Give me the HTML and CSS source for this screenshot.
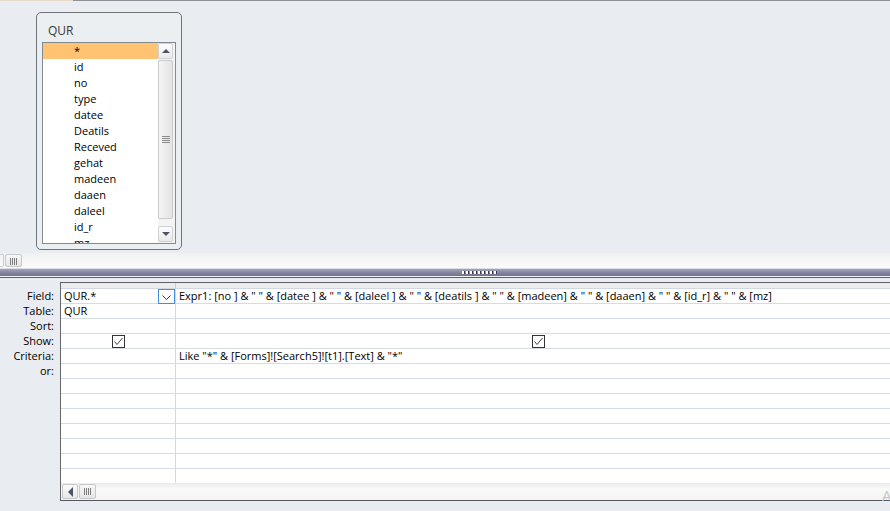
FILE: index.html
```html
<!DOCTYPE html>
<html lang="en">
<head>
  <meta charset="UTF-8">
  <title>Query Design</title>
  <link rel="stylesheet" href="styles.css">
</head>
<body>

<div class="topline"></div>

<!-- table pane -->
<div class="design">
  <div class="tablebox">
    <div class="tabletitle">QUR</div>
    <div class="fieldlist">
      <ul class="fields">
        <li class="sel">*</li>
        <li>id</li>
        <li>no</li>
        <li>type</li>
        <li>datee</li>
        <li>Deatils</li>
        <li>Receved</li>
        <li>gehat</li>
        <li>madeen</li>
        <li>daaen</li>
        <li>daleel</li>
        <li>id_r</li>
        <li>mz</li>
      </ul>
      <div class="vscroll">
        <span class="sbtn"><i class="tri up"></i></span>
        <span class="vthumb"></span>
        <span class="vtrack"></span>
        <span class="sbtn last"><i class="tri down"></i></span>
      </div>
    </div>
  </div>
</div>

<div class="hscroll">
  <span class="hbtn-cut"></span>
  <span class="hthumb"></span>
</div>
<div class="splitter"><span class="dots"></span></div>
<div class="paneedge"></div>

<!-- design grid -->
<div class="lower">
  <div class="labels">
    <div>Field:</div>
    <div>Table:</div>
    <div>Sort:</div>
    <div>Show:</div>
    <div>Criteria:</div>
    <div>or:</div>
  </div>
  <div class="grid">
    <div class="ghead"><span class="c1"></span><span class="c2"></span></div>
    <div class="grow">
      <span class="c1 field">QUR.*<span class="dd"><svg width="9" height="5" viewBox="0 0 9 5"><polyline points="0.5,0.5 4.5,4.5 8.5,0.5" fill="none" stroke="#333" stroke-width="1"/></svg></span></span>
      <span class="c2">Expr1: [no ] &amp; " " &amp; [datee ] &amp; " " &amp; [daleel ] &amp; " " &amp; [deatils ] &amp; " " &amp; [madeen] &amp; " " &amp; [daaen] &amp; " " &amp; [id_r] &amp; " " &amp; [mz]</span>
    </div>
    <div class="grow"><span class="c1">QUR</span><span class="c2"></span></div>
    <div class="grow"><span class="c1"></span><span class="c2"></span></div>
    <div class="grow">
      <span class="c1 chk"><i class="box"><svg width="11" height="11" viewBox="0 0 11 11"><polyline points="1.5,5.5 4,8.5 9.5,2" fill="none" stroke="#444" stroke-width="1"/></svg></i></span>
      <span class="c2 chk"><i class="box"><svg width="11" height="11" viewBox="0 0 11 11"><polyline points="1.5,5.5 4,8.5 9.5,2" fill="none" stroke="#444" stroke-width="1"/></svg></i></span>
    </div>
    <div class="grow"><span class="c1"></span><span class="c2">Like "*" &amp; [Forms]![Search5]![t1].[Text] &amp; "*"</span></div>
    <div class="grow"><span class="c1"></span><span class="c2"></span></div>
    <div class="grow"><span class="c1"></span><span class="c2"></span></div>
    <div class="grow"><span class="c1"></span><span class="c2"></span></div>
    <div class="grow"><span class="c1"></span><span class="c2"></span></div>
    <div class="grow"><span class="c1"></span><span class="c2"></span></div>
    <div class="grow"><span class="c1"></span><span class="c2"></span></div>
    <div class="grow"><span class="c1"></span><span class="c2"></span></div>
    <div class="grow end"><span class="c1"></span><span class="c2"></span></div>
    <div class="gscroll">
      <span class="hbtn"><i class="tri left"></i></span>
      <span class="hthumb"></span>
    </div>
  </div>
</div>

<span class="grip">A</span>

</body>
</html>
```

FILE: styles.css
```css
* { margin: 0; padding: 0; box-sizing: border-box; }
body { width: 890px; height: 511px; overflow: hidden; position: relative;
  background: #e9ecf0; color: #000;
  font-family: "Open Sans", "Noto Sans", sans-serif; font-size: 11px; }

.topline { height: 1px;
  background: linear-gradient(90deg, #ead9c6 0 73px, #8d9298 73px); }

/* table pane */
.design { height: 252px; padding: 11px 0 0 36px; }
.tablebox { width: 146px; height: 238px; padding-left: 5px;
  border: 1px solid #6f7479; border-radius: 5px; background: #eceff2; }
.tabletitle { height: 29px; padding: 11px 0 0 6px;
  font-size: 12px; line-height: 14px; color: #3a3a3a; }
.fieldlist { display: flex; width: 134px; height: 202px;
  border: 1px solid #838891; background: #fff; }
.fields { list-style: none; width: 115px; overflow: hidden; }
.fields li { height: 16px; line-height: 16px; padding-left: 31px; }
.fields li.sel { background: #ffc372; }

.vscroll { width: 17px; display: flex; flex-direction: column;
  padding-right: 2px; background: #f4f4f4; }
.sbtn { height: 16px; border: 1px solid #cfd1d4; border-radius: 2px;
  background: linear-gradient(#fdfdfd, #e9e9e9);
  display: flex; align-items: center; justify-content: center; }
.sbtn.last { margin-bottom: 1px; }
.vthumb { height: 159px; margin-top: 1px; border: 1px solid #c9cacc; border-radius: 2px;
  background: linear-gradient(90deg, #f5f5f5, #e3e3e3); position: relative; }
.vthumb::after { content: ""; position: absolute; left: 3px; top: 75px;
  width: 8px; height: 7px;
  background: repeating-linear-gradient(#8a8a8a 0 1px, transparent 1px 2px); }
.vtrack { flex: 1; }

.tri { display: block; width: 0; height: 0; }
.tri.up { border: 4px solid transparent; border-top: 0; border-bottom: 4px solid #4c5369; }
.tri.down { border: 4px solid transparent; border-bottom: 0; border-top: 4px solid #4c5369; }
.tri.left { border: 5px solid transparent; border-left: 0; border-right: 5px solid #4c5369; }

/* horizontal scroll of table pane + splitter */
.hscroll { height: 16px; display: flex; padding: 1px 0;
  border-bottom: 1px solid #dcdfe3; background: linear-gradient(#f1f1f1, #fbfbfb); }
.hbtn-cut { width: 4px; border: 1px solid #c8cacd; border-left: 0; border-radius: 0 2px 2px 0; }
.hthumb { width: 17px; margin-left: 1px; border: 1px solid #c6c8cb; border-radius: 2px;
  background: linear-gradient(#f7f7f7, #e6e6e6); position: relative; }
.hthumb::after { content: ""; position: absolute; left: 4px; top: 3px;
  width: 7px; height: 7px;
  background: repeating-linear-gradient(90deg, #7d7d7d 0 1px, transparent 1px 2px); }
.splitter { height: 7px; display: flex; justify-content: center; padding-top: 2px;
  background: linear-gradient(#a3a3bd, #8686a3 50%, #727290); }
.dots { width: 36px; height: 3px; margin-left: 70px;
  background:
    repeating-linear-gradient(90deg, #fff 0 2px, #3b3b55 2px 3px, transparent 3px 4px); }
.paneedge { height: 2px;
  background: linear-gradient(#f3f3f3 0 1px, #5b6066 1px); }

/* design grid */
.lower { display: flex; padding-top: 4px; }
.labels { width: 60px; flex: none; padding: 7px 6px 0 0; text-align: right; }
.labels div { height: 15px; line-height: 14px; }
.grid { flex: none; width: 830px; overflow: hidden;
  border-left: 1px solid #646669; border-top: 1px solid #5d6065; border-bottom: 1px solid #55585c; }
.ghead { display: flex; height: 6px; border-bottom: 1px solid #d1d8e3; background: #ececec; }
.ghead .c1 { border-right-color: #c9ccd0; }
.grow { display: flex; height: 15px; border-bottom: 1px solid #d5dbe5; background: #fff; }
.grow.end { height: 14px; border-bottom: 0; }
.c1, .c2 { flex: none; padding-left: 3px; line-height: 14px; white-space: nowrap; }
.c1 { width: 115px; border-right: 1px solid #d0d7e5; }
.c2 { width: 725px; }
.field { display: flex; justify-content: space-between; padding-right: 0; }
.dd { width: 17px; height: 15px; border: 1px solid #3f8fdf; background: #fff;
  display: flex; align-items: center; justify-content: center; padding-top: 2px; }
.chk { display: flex; justify-content: center; padding: 0; }
.box { display: flex; width: 13px; height: 13px; margin-top: 1px;
  border: 1px solid #333; background: #fff; }

.gscroll { height: 17px; display: flex; padding: 1px 0 1px 1px;
  background: linear-gradient(#ebebeb, #f9f9f9 35%, #f3f3f3); }
.hbtn { width: 16px; border: 1px solid #c6c8cb; border-radius: 2px;
  background: linear-gradient(#fbfbfb, #e8e8e8);
  display: flex; align-items: center; justify-content: center; }
.gscroll .hthumb { margin-left: 1px; }

.grip { position: absolute; left: 882px; top: 488px;
  font-size: 15px; line-height: 15px; color: #c4c6c9; }
```
